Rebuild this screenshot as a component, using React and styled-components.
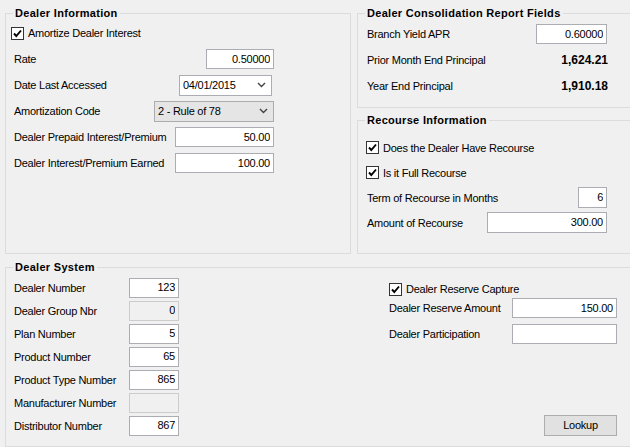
import React from 'react';
import styled, { createGlobalStyle } from 'styled-components';

const GlobalStyle = createGlobalStyle`
  html, body {
    margin: 0;
    padding: 0;
    background: #f0f0f0;
    overflow: hidden;
  }
  body {
    font-family: "Liberation Sans", Arial, sans-serif;
    font-size: 11px;
    letter-spacing: -0.25px;
    color: #000;
  }
`;

const Page = styled.div`
  width: 640px;
  height: 447px;
  box-sizing: border-box;
  padding: 6px 0 0 5px;
  display: grid;
  grid-template-columns: 346px 283px;
  grid-template-rows: 248px 1fr;
  column-gap: 6px;
  row-gap: 6px;
`;

const RightColumn = styled.div`
  display: flex;
  flex-direction: column;
  gap: 5px;
`;

const Group = styled.fieldset`
  margin: 0;
  padding: 0;
  min-width: 0;
  box-sizing: border-box;
  border: 1px solid #dcdcdc;
  height: ${p => (p.$height ? `${p.$height}px` : 'auto')};
  flex: ${p => (p.$grow ? 1 : 'none')};
  grid-column: ${p => (p.$span ? '1 / -1' : 'auto')};
`;

const Title = styled.legend`
  margin-left: 7px;
  padding: 0 2px;
  font-weight: bold;
  font-size: 11px;
  line-height: 14px;
  letter-spacing: 0.3px;
`;

const Body = styled.div`
  padding: ${p => p.$pad || '0'};
`;

const Row = styled.div`
  display: flex;
  align-items: center;
  justify-content: space-between;
  height: ${p => p.$h || 26}px;
  width: ${p => p.$w}px;
`;

const CheckRow = styled.label`
  display: flex;
  align-items: center;
  gap: 4px;
  height: ${p => p.$h || 26}px;
  margin-left: ${p => p.$shift || 0}px;
`;

const Label = styled.span`
  white-space: nowrap;
  width: ${p => (p.$w ? `${p.$w}px` : 'auto')};
  flex: none;
`;

const Value = styled.span`
  font-weight: bold;
  font-size: 12px;
  letter-spacing: 0;
  margin-right: -1px;
`;

const TextBox = styled.input`
  box-sizing: border-box;
  width: ${p => p.$w}px;
  height: ${p => p.$h || 20}px;
  margin: 0;
  padding: 0 3px 1px;
  border: 1px solid ${p => (p.$off ? '#cccccc' : '#abadb3')};
  background: ${p => (p.$off ? '#f0f0f0' : '#ffffff')};
  font: inherit;
  letter-spacing: -0.25px;
  color: #000;
  text-align: right;
  outline: none;
`;

const Combo = styled.div`
  box-sizing: border-box;
  width: ${p => p.$w}px;
  height: 21px;
  display: flex;
  align-items: center;
  justify-content: space-between;
  padding: 0 5px 1px 3px;
  border: 1px solid #abadb3;
  background: ${p => (p.$flat ? '#e5e5e5' : '#ffffff')};
  border-color: ${p => (p.$flat ? '#acacac' : '#abadb3')};
  margin-right: ${p => p.$mr || 0}px;
`;

const Box = styled.span`
  box-sizing: border-box;
  width: 13px;
  height: 13px;
  border: 1px solid #333333;
  background: #ffffff;
  display: flex;
  align-items: center;
  justify-content: center;
  flex: none;
`;

const SystemGrid = styled.div`
  display: grid;
  grid-template-columns: 375px 228px;
  padding-left: 8px;
`;

const Stack = styled.div`
  display: flex;
  flex-direction: column;
  padding-top: ${p => p.$top || 0}px;
`;

const FieldLine = styled.div`
  display: flex;
  align-items: center;
  height: 23px;
`;

const Button = styled.button`
  align-self: flex-end;
  margin-top: 68px;
  width: 73px;
  height: 21px;
  border: 1px solid #adadad;
  background: #e1e1e1;
  font: inherit;
  letter-spacing: -0.25px;
  color: #000;
  padding: 0 0 1px;
`;

const Chevron = () => (
  <svg width="9" height="6" viewBox="0 0 9 6">
    <path d="M1 1 L4.5 4.5 L8 1" fill="none" stroke="#444" strokeWidth="1.4" />
  </svg>
);

const Check = ({ label, h, shift }) => (
  <CheckRow $h={h} $shift={shift}>
    <Box>
      <svg width="11" height="11" viewBox="0 0 11 11">
        <path d="M2 5.5 L4.3 8 L9 2.5" fill="none" stroke="#000" strokeWidth="1.9" />
      </svg>
    </Box>
    <span>{label}</span>
  </CheckRow>
);

const systemFields = [
  { label: 'Dealer Number', value: '123' },
  { label: 'Dealer Group Nbr', value: '0', off: true },
  { label: 'Plan Number', value: '5' },
  { label: 'Product Number', value: '65' },
  { label: 'Product Type Number', value: '865' },
  { label: 'Manufacturer Number', value: '', off: true },
  { label: 'Distributor Number', value: '867' },
];

export default function App() {
  return (
    <>
      <GlobalStyle />
      <Page>
        <Group>
          <Title>Dealer Information</Title>
          <Body $pad="0 0 0 8px">
            <Check label="Amortize Dealer Interest" shift={-3} />
            <Row $w={260}>
              <Label>Rate</Label>
              <TextBox $w={68} readOnly value="0.50000" />
            </Row>
            <Row $w={260}>
              <Label>Date Last Accessed</Label>
              <Combo $w={93} $mr={2}>
                <span>04/01/2015</span>
                <Chevron />
              </Combo>
            </Row>
            <Row $w={260}>
              <Label>Amortization Code</Label>
              <Combo $w={120} $flat>
                <span>2 - Rule of 78</span>
                <Chevron />
              </Combo>
            </Row>
            <Row $w={260}>
              <Label>Dealer Prepaid Interest/Premium</Label>
              <TextBox $w={99} readOnly value="50.00" />
            </Row>
            <Row $w={260}>
              <Label>Dealer Interest/Premium Earned</Label>
              <TextBox $w={99} readOnly value="100.00" />
            </Row>
          </Body>
        </Group>

        <RightColumn>
          <Group $height={102}>
            <Title>Dealer Consolidation Report Fields</Title>
            <Body $pad="1px 0 0 9px">
              <Row $w={240}>
                <Label>Branch Yield APR</Label>
                <TextBox $w={71} readOnly value="0.60000" />
              </Row>
              <Row $w={240}>
                <Label>Prior Month End Principal</Label>
                <Value>1,624.21</Value>
              </Row>
              <Row $w={240}>
                <Label>Year End Principal</Label>
                <Value>1,910.18</Value>
              </Row>
            </Body>
          </Group>
          <Group $grow>
            <Title>Recourse Information</Title>
            <Body $pad="8px 0 0 9px">
              <Check label="Does the Dealer Have Recourse" h={25} shift={-1} />
              <Check label="Is it Full Recourse" h={25} shift={-1} />
              <Row $w={240} $h={25}>
                <Label>Term of Recourse in Months</Label>
                <TextBox $w={29} $h={21} readOnly value="6" />
              </Row>
              <Row $w={240} $h={25}>
                <Label>Amount of Recourse</Label>
                <TextBox $w={120} $h={21} readOnly value="300.00" />
              </Row>
            </Body>
          </Group>
        </RightColumn>

        <Group $span>
          <Title>Dealer System</Title>
          <SystemGrid>
            <Stack $top={2}>
              {systemFields.map(f => (
                <FieldLine key={f.label}>
                  <Label $w={115}>{f.label}</Label>
                  <TextBox $w={50} $off={f.off} readOnly value={f.value} />
                </FieldLine>
              ))}
            </Stack>
            <Stack $top={9}>
              <Check label="Dealer Reserve Capture" h={12} />
              <Row $w={228}>
                <Label>Dealer Reserve Amount</Label>
                <TextBox $w={105} readOnly value="150.00" />
              </Row>
              <Row $w={228}>
                <Label>Dealer Participation</Label>
                <TextBox $w={105} readOnly value="" />
              </Row>
              <Button>Lookup</Button>
            </Stack>
          </SystemGrid>
        </Group>
      </Page>
    </>
  );
}
